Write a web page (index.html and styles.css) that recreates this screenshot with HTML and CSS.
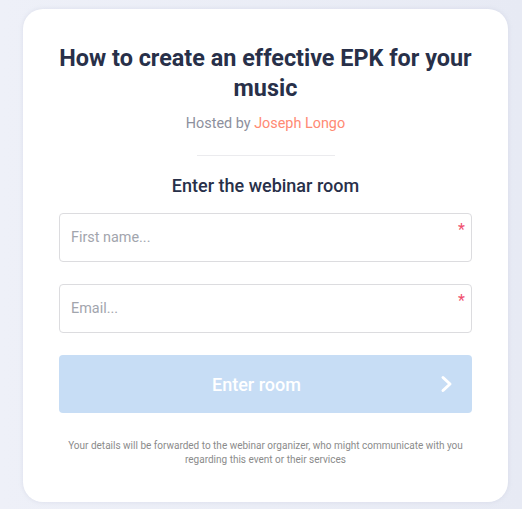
FILE: index.html
```html
<!DOCTYPE html>
<html>
<head>
<meta charset="utf-8">
<link rel="stylesheet" href="styles.css">
</head>
<body>
<div class="page">
  <div class="card">
    <h1 class="title">How to create an effective EPK for your music</h1>
    <p class="host">Hosted by <span class="host-name">Joseph Longo</span></p>
    <div class="divider"></div>
    <h2 class="subtitle">Enter the webinar room</h2>
    <form class="form">
      <label class="field">
        <input class="input" type="text" placeholder="First name...">
        <span class="req">*</span>
      </label>
      <label class="field">
        <input class="input" type="email" placeholder="Email...">
        <span class="req">*</span>
      </label>
      <button class="btn" type="button">
        <span class="btn-label">Enter room</span>
        <svg class="btn-icon" width="14" height="18" viewBox="0 0 14 18"><path d="M3 2.5 L10 9 L3 15.5" fill="none" stroke="#fff" stroke-width="3" stroke-linecap="round" stroke-linejoin="round"/></svg>
      </button>
    </form>
    <p class="note">Your details will be forwarded to the webinar organizer, who might communicate with you regarding this event or their services</p>
  </div>
</div>
</body>
</html>
```
FILE: styles.css
```css
* { box-sizing: border-box; }
html, body { margin: 0; padding: 0; }
body {
  font-family: Roboto, "Liberation Sans", Arial, sans-serif;
  background: linear-gradient(90deg, #eef0f8 0%, #e7eaf4 100%);
  width: 522px;
  height: 509px;
  overflow: hidden;
}
.page {
  padding: 9px 14px 0 23px;
  height: 509px;
}
.card {
  background: #fff;
  border-radius: 20px;
  width: 485px;
  height: 493px;
  padding: 34px 34px 0 34px;
  box-shadow: 0 0 4px rgba(180, 186, 210, 0.35);
  text-align: center;
}
.title {
  margin: 0;
  font-size: 23.4px;
  line-height: 30px;
  font-weight: 700;
  color: #283049;
}
.host {
  margin: 12px 0 0 0;
  font-size: 14.4px;
  line-height: 18px;
  color: #8d909d;
}
.host-name { color: #ff8a73; }
.divider {
  width: 138px;
  height: 1px;
  background: #ebebee;
  margin: 22px auto 0 auto;
}
.subtitle {
  margin: 19px 0 0 0;
  font-size: 18px;
  line-height: 22px;
  font-weight: 500;
  color: #283049;
}
.form {
  margin: 16px 2px 0 2px;
  display: flex;
  flex-direction: column;
}
.field {
  position: relative;
  display: block;
  margin-bottom: 22px;
}
.input {
  display: block;
  width: 100%;
  height: 49px;
  border: 1px solid #dcdcdf;
  border-radius: 4px;
  padding: 0 11px;
  font-family: inherit;
  font-size: 14.4px;
  color: #333;
  background: #fff;
  outline: none;
}
.input::placeholder { color: #a2a5ad; }
.req {
  position: absolute;
  top: 9px;
  right: 7px;
  color: #f0506e;
  font-size: 16px;
  line-height: 16px;
}
.btn {
  position: relative;
  height: 58px;
  width: 100%;
  border: none;
  border-radius: 4px;
  background: #c7ddf5;
  color: #fff;
  font-family: inherit;
  font-size: 18px;
  font-weight: 500;
  display: flex;
  align-items: center;
  justify-content: center;
  padding: 0 18px 0 0;
}
.btn-icon {
  position: absolute;
  right: 18px;
  top: 20px;
}
.note {
  margin: 26px 2px 0 2px;
  font-size: 10px;
  line-height: 14px;
  color: #8b8b8b;
  padding: 0;
}
```
